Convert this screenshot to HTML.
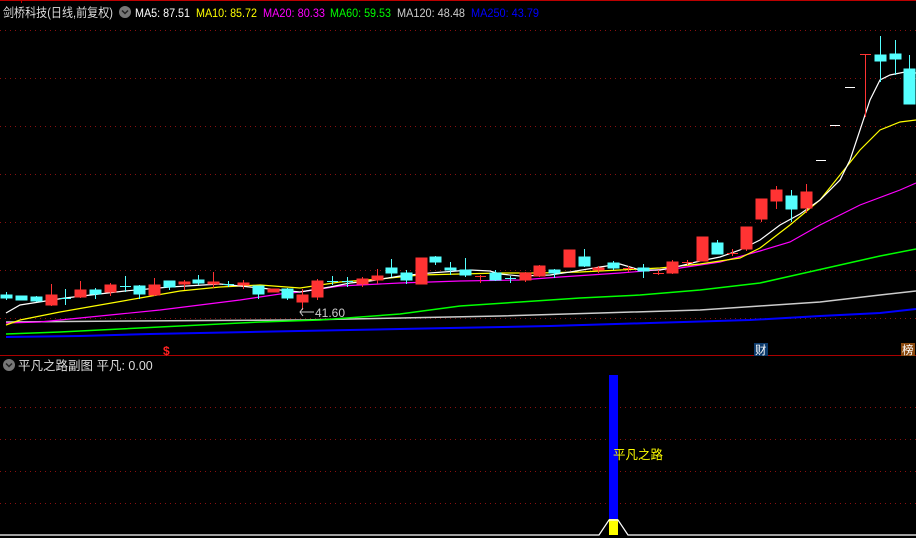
<!DOCTYPE html>
<html><head><meta charset="utf-8">
<style>
html,body{margin:0;padding:0;background:#000;width:916px;height:538px;overflow:hidden}
svg{display:block}
text{font-family:"Liberation Sans","Noto Sans CJK SC",sans-serif}
</style></head><body>
<svg width="916" height="538" viewBox="0 0 916 538" xmlns="http://www.w3.org/2000/svg">
<rect width="916" height="538" fill="#000"/>
<line x1="0" y1="0.5" x2="916" y2="0.5" stroke="#b00" stroke-width="1"/>
<line x1="21.5" y1="0" x2="21.5" y2="3" stroke="#b00"/>
<!-- grid -->
<g stroke="#8a1010" stroke-width="1" stroke-dasharray="1,4">
<line x1="0" y1="30.5" x2="916" y2="30.5"/>
<line x1="0" y1="78.5" x2="916" y2="78.5"/>
<line x1="0" y1="126.5" x2="916" y2="126.5"/>
<line x1="0" y1="174.5" x2="916" y2="174.5"/>
<line x1="0" y1="222.5" x2="916" y2="222.5"/>
<line x1="0" y1="270.5" x2="916" y2="270.5"/>
<line x1="0" y1="318.5" x2="916" y2="318.5"/>
<line x1="0" y1="407.5" x2="916" y2="407.5"/>
<line x1="0" y1="439.5" x2="916" y2="439.5"/>
<line x1="0" y1="471.5" x2="916" y2="471.5"/>
<line x1="0" y1="503.5" x2="916" y2="503.5"/>
</g>
<line x1="0" y1="355.5" x2="916" y2="355.5" stroke="#a00"/>

<!-- header -->
<text x="3" y="17" font-size="12.5" fill="#ddd" textLength="110" lengthAdjust="spacingAndGlyphs">剑桥科技(日线,前复权)</text>
<circle cx="125" cy="12" r="6" fill="#777"/>
<path d="M122 10.5 L125 13.5 L128 10.5" stroke="#222" stroke-width="1.5" fill="none"/>
<text x="135" y="17" font-size="12" fill="#fff" textLength="55" lengthAdjust="spacingAndGlyphs">MA5: 87.51</text>
<text x="196" y="17" font-size="12" fill="#ff0" textLength="61" lengthAdjust="spacingAndGlyphs">MA10: 85.72</text>
<text x="263" y="17" font-size="12" fill="#f0f" textLength="62" lengthAdjust="spacingAndGlyphs">MA20: 80.33</text>
<text x="330" y="17" font-size="12" fill="#0f0" textLength="61" lengthAdjust="spacingAndGlyphs">MA60: 59.53</text>
<text x="397" y="17" font-size="12" fill="#ccc" textLength="68" lengthAdjust="spacingAndGlyphs">MA120: 48.48</text>
<text x="471" y="17" font-size="12" fill="#00f" textLength="68" lengthAdjust="spacingAndGlyphs">MA250: 43.79</text>

<!-- MAs -->
<g fill="none" stroke-width="1.2">
<polyline stroke="#0000ff" stroke-width="2" points="6,337 80,336 150,334 250,332 350,330 450,328 550,326 650,323 750,320 820,316 880,313 916,309"/>
<polyline stroke="#ccc" stroke-width="1.5" points="6,322 130,321 300,320 400,318 500,316 600,313 700,310 760,306 820,302 880,295 916,291"/>
<polyline stroke="#00ff00" stroke-width="1.5" points="6,334 60,332 120,329 200,325 260,322 320,320 400,314 460,306 520,302 580,298 640,295 700,290 760,283 800,274 840,265 880,256 916,249"/>
<polyline stroke="#ff00ff" points="6,323 40,322 80,318 120,314 160,310 200,305 240,300 280,294 300,292 340,286 400,283 460,281 520,280 560,277 620,273 680,268 720,262 760,251 790,242 820,225 860,205 900,190 916,183"/>
<polyline stroke="#ffff00" points="6,325 20,320 60,312 100,305 140,298 180,291 220,287 260,285 300,288 340,282 380,279 420,275 460,274 500,273 540,273 580,272 620,270 660,268 700,264 740,258 760,248 790,225 820,200 840,175 860,150 880,130 900,122 916,120"/>
<polyline stroke="#fff" points="6,313 20,305 65,298 125,291 170,287 220,284 260,288 300,292 330,287 350,283 370,281 400,276 430,273 470,270 490,271 500,274 520,276 550,275 570,272 600,267 620,264 640,270 660,270 680,266 700,261 720,257 740,250 760,240 780,225 800,214 820,200 840,180 850,160 860,130 870,100 880,80 890,75 905,72 916,73"/>
</g>

<!-- candles: cyan -->
<g stroke="#55ffff" fill="#55ffff">
<line x1="6.5" y1="292" x2="6.5" y2="300"/><rect x="1" y="295" width="11" height="3"/>
<rect x="16" y="296" width="11" height="4"/>
<line x1="36.5" y1="296" x2="36.5" y2="302"/><rect x="31" y="297" width="11" height="4"/>
<line x1="65.5" y1="289" x2="65.5" y2="305"/><line x1="60" y1="298.5" x2="71" y2="298.5"/>
<line x1="95.5" y1="288" x2="95.5" y2="299"/><rect x="90" y="290" width="11" height="4"/>
<line x1="125.5" y1="276" x2="125.5" y2="292"/><line x1="120" y1="286.5" x2="131" y2="286.5"/>
<line x1="139.5" y1="285" x2="139.5" y2="299"/><rect x="134" y="286" width="11" height="8"/>
<line x1="169.5" y1="281" x2="169.5" y2="290"/><rect x="164" y="281" width="11" height="6"/>
<line x1="198.5" y1="275" x2="198.5" y2="285"/><rect x="193" y="280" width="11" height="3"/>
<line x1="228.5" y1="281" x2="228.5" y2="287"/><line x1="223" y1="284.5" x2="234" y2="284.5"/>
<line x1="258.5" y1="286" x2="258.5" y2="299"/><rect x="253" y="286" width="11" height="8"/>
<line x1="287.5" y1="288" x2="287.5" y2="300"/><rect x="282" y="289" width="11" height="9"/>
<line x1="332.5" y1="276" x2="332.5" y2="285"/><line x1="327" y1="281.5" x2="338" y2="281.5"/>
<line x1="347.5" y1="277" x2="347.5" y2="287"/><line x1="342" y1="281.5" x2="353" y2="281.5"/>
<line x1="391.5" y1="259" x2="391.5" y2="277"/><rect x="386" y="268" width="11" height="5"/>
<line x1="406.5" y1="270" x2="406.5" y2="284"/><rect x="401" y="273" width="11" height="7"/>
<line x1="435.5" y1="256" x2="435.5" y2="265"/><rect x="430" y="257" width="11" height="5"/>
<line x1="450.5" y1="262" x2="450.5" y2="275"/><rect x="445" y="268" width="11" height="2"/>
<line x1="465.5" y1="258" x2="465.5" y2="277"/><rect x="460" y="270" width="11" height="5"/>
<line x1="495.5" y1="270" x2="495.5" y2="281"/><rect x="490" y="273" width="11" height="7"/>
<line x1="510.5" y1="276" x2="510.5" y2="283"/><line x1="505" y1="278.5" x2="516" y2="278.5"/>
<line x1="554.5" y1="269" x2="554.5" y2="278"/><rect x="549" y="270" width="11" height="3"/>
<line x1="584.5" y1="249" x2="584.5" y2="267"/><rect x="579" y="257" width="11" height="9"/>
<line x1="613.5" y1="261" x2="613.5" y2="270"/><rect x="608" y="263" width="11" height="5"/>
<line x1="643.5" y1="264" x2="643.5" y2="278"/><rect x="638" y="268" width="11" height="3"/>
<line x1="717.5" y1="240" x2="717.5" y2="254"/><rect x="712" y="243" width="11" height="11"/>
<line x1="791.5" y1="190" x2="791.5" y2="222"/><rect x="786" y="196" width="11" height="13"/>
<line x1="880.5" y1="36" x2="880.5" y2="82"/><rect x="875" y="55" width="11" height="6"/>
<line x1="895.5" y1="40" x2="895.5" y2="75"/><rect x="890" y="54" width="11" height="5"/>
<line x1="909.5" y1="55" x2="909.5" y2="69"/><rect x="904" y="69" width="11" height="35"/>
</g>
<!-- candles: red -->
<g stroke="#ff3333" fill="#ff3333">
<line x1="51.5" y1="284" x2="51.5" y2="306"/><rect x="46" y="295" width="11" height="10"/>
<line x1="80.5" y1="281" x2="80.5" y2="298"/><rect x="75" y="290" width="11" height="7"/>
<line x1="110.5" y1="283" x2="110.5" y2="296"/><rect x="105" y="285" width="11" height="7"/>
<line x1="154.5" y1="278" x2="154.5" y2="296"/><rect x="149" y="285" width="11" height="10"/>
<line x1="184.5" y1="280" x2="184.5" y2="290"/><rect x="179" y="282" width="11" height="2"/>
<line x1="213.5" y1="272" x2="213.5" y2="288"/><rect x="208" y="282" width="11" height="2"/>
<line x1="243.5" y1="280" x2="243.5" y2="289"/><rect x="238" y="283" width="11" height="2"/>
<rect x="268" y="289" width="11" height="3"/>
<line x1="302.5" y1="289" x2="302.5" y2="310"/><rect x="297" y="295" width="11" height="7"/>
<line x1="317.5" y1="279" x2="317.5" y2="300"/><rect x="312" y="281" width="11" height="16"/>
<line x1="362.5" y1="277" x2="362.5" y2="287"/><rect x="357" y="279" width="11" height="5"/>
<line x1="377.5" y1="269" x2="377.5" y2="284"/><rect x="372" y="276" width="11" height="4"/>
<rect x="416" y="258" width="11" height="26"/>
<line x1="480.5" y1="275" x2="480.5" y2="283"/><line x1="475" y1="276.5" x2="486" y2="276.5"/>
<line x1="525.5" y1="272" x2="525.5" y2="282"/><rect x="520" y="273" width="11" height="7"/>
<line x1="539.5" y1="265" x2="539.5" y2="277"/><rect x="534" y="266" width="11" height="10"/>
<rect x="564" y="250" width="11" height="17"/>
<line x1="598.5" y1="266" x2="598.5" y2="273"/><rect x="593" y="268" width="11" height="2"/>
<line x1="628.5" y1="266" x2="628.5" y2="272"/><line x1="623" y1="268.5" x2="634" y2="268.5"/>
<line x1="658.5" y1="270" x2="658.5" y2="275"/><line x1="653" y1="273.5" x2="664" y2="273.5"/>
<line x1="672.5" y1="260" x2="672.5" y2="274"/><rect x="667" y="262" width="11" height="11"/>
<line x1="687.5" y1="260" x2="687.5" y2="265"/><line x1="682" y1="262.5" x2="693" y2="262.5"/>
<rect x="697" y="237" width="11" height="24"/>
<line x1="732.5" y1="249" x2="732.5" y2="256"/><line x1="727" y1="253.5" x2="738" y2="253.5"/>
<line x1="746.5" y1="227" x2="746.5" y2="251"/><rect x="741" y="227" width="11" height="22"/>
<line x1="761.5" y1="199" x2="761.5" y2="222"/><rect x="756" y="199" width="11" height="20"/>
<line x1="776.5" y1="186" x2="776.5" y2="209"/><rect x="771" y="190" width="11" height="11"/>
<line x1="806.5" y1="184" x2="806.5" y2="213"/><rect x="801" y="192" width="11" height="16"/>
<line x1="865.5" y1="54" x2="865.5" y2="117"/><line x1="860" y1="54.5" x2="871" y2="54.5"/>
</g>
<g stroke="#fff">
<line x1="816" y1="160.5" x2="826" y2="160.5"/>
<line x1="830" y1="125.5" x2="840" y2="125.5"/>
<line x1="845" y1="87.5" x2="855" y2="87.5"/>
</g>
<path d="M303 308 L300 312 L303 316 M300 312 L314 312" stroke="#ccc" fill="none"/>
<text x="315" y="317" font-size="12" fill="#ccc">41.60</text>
<text x="163" y="355" font-size="12" font-weight="bold" fill="#f22">$</text>
<rect x="754" y="343" width="14" height="13" fill="#0c3a6b"/>
<text x="755" y="354" font-size="11.5" fill="#fff">财</text>
<rect x="901" y="343" width="14" height="13" fill="#8a4a10"/>
<text x="902" y="354" font-size="11.5" fill="#fff">榜</text>

<!-- lower panel -->
<circle cx="9" cy="365" r="6" fill="#777"/>
<path d="M6 363.5 L9 366.5 L12 363.5" stroke="#222" stroke-width="1.5" fill="none"/>
<text x="18" y="370" font-size="12.5" fill="#ddd">平凡之路副图 平凡: 0.00</text>
<rect x="609" y="375" width="9" height="144" fill="#0000ff"/>
<rect x="609" y="519" width="9" height="16" fill="#ffff00"/>
<polyline points="0,535 599,535 609,520 618,520 628,535 916,535" stroke="#fff" fill="none" stroke-width="1.2"/>
<text x="613" y="459" font-size="12.5" fill="#ffff00">平凡之路</text>
</svg>
</body></html>
